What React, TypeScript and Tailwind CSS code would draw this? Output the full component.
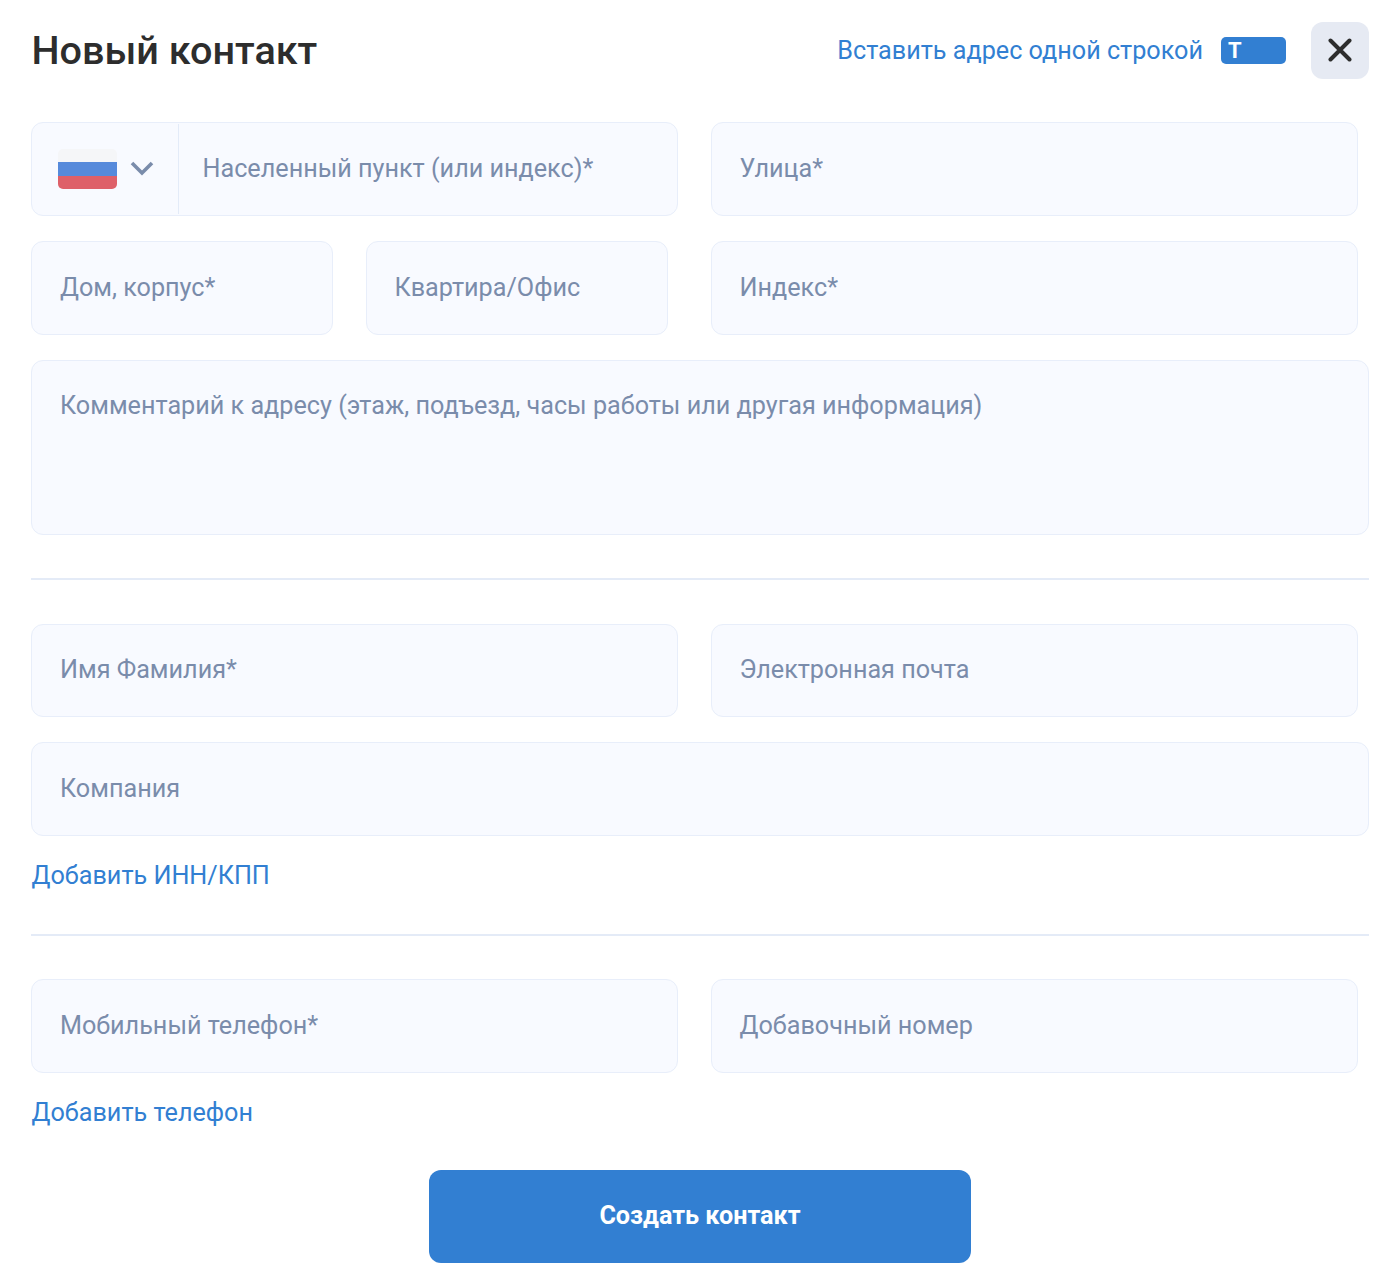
import React from "react";

const base = "bg-[#f8faff] border border-[#e8eefa] rounded-[12px]";
const ph = "text-[25.2px] leading-[32px] text-[#7a8cab]";

function Field({ label, className = "", h = "h-[94px]", pl = "pl-[28px]" }: { label: string; className?: string; h?: string; pl?: string }) {
  return (
    <div className={`${base} ${h} flex items-center ${pl} ${className}`}>
      <span className={ph}>{label}</span>
    </div>
  );
}

function Link({ children }: { children: React.ReactNode }) {
  return <a className="text-[25.2px] leading-[32px] text-[#327fd2] block pl-[0.5px]">{children}</a>;
}

export default function App() {
  return (
    <div className="w-[1400px] h-[1280px] bg-white pl-[31px] pr-[31px] font-['Roboto',sans-serif]">
      <header className="flex items-center h-[122px] pb-[22px]">
        <h1 className="text-[39.6px] leading-[48px] font-medium text-[#2d2d2d] flex-1 pt-[2px] pl-[0.5px]">Новый контакт</h1>
        <a className="text-[25.2px] leading-[32px] text-[#327fd2] mt-[1px]">Вставить адрес одной строкой</a>
        <span className="ml-[18px] w-[65px] h-[27px] bg-[#327fd2] rounded-[5px] text-white font-bold text-[22px] leading-[27px] pl-[7px]">T</span>
        <button className="ml-[25px] w-[58px] h-[57px] bg-[#e6eaf3] rounded-[12px] flex items-center justify-center">
          <svg width="24" height="24" viewBox="0 0 24 24" fill="none" stroke="#2d2d2d" strokeWidth="4" strokeLinecap="round">
            <path d="M2.5 2.5L21.5 21.5M21.5 2.5L2.5 21.5" />
          </svg>
        </button>
      </header>

      <div className="flex">
        <div className={`${base} w-[647px] h-[94px] flex items-center`}>
          <div className="w-[147px] h-[90px] border-r border-[#e3ebf8] flex items-center pl-[26px] shrink-0">
            <div className="w-[59px] h-[40px] rounded-[5px] overflow-hidden flex flex-col shrink-0">
              <div className="h-[13px] bg-[#f5f6f8]" />
              <div className="h-[14px] bg-[#568adb]" />
              <div className="h-[13px] bg-[#de6069]" />
            </div>
            <svg className="ml-[13px] mb-[2px]" width="24" height="16" viewBox="0 0 24 16" fill="none" stroke="#7a8cab" strokeWidth="3.6">
              <path d="M2 3L12 13L22 3" />
            </svg>
          </div>
          <span className={`${ph} pl-[23.5px]`}>Населенный пункт (или индекс)*</span>
        </div>
        <Field label="Улица*" className="w-[647px] ml-[33px]" pl="pl-[27.5px]" />
      </div>

      <div className="flex mt-[25px]">
        <Field label="Дом, корпус*" className="w-[302px]" />
        <Field label="Квартира/Офис" className="w-[302px] ml-[33px]" pl="pl-[27.5px]" />
        <Field label="Индекс*" className="w-[647px] ml-[43px]" pl="pl-[27.5px]" />
      </div>

      <div className={`${base} h-[175px] mt-[25px] pl-[28px] pt-[29px]`}>
        <span className={`${ph} block`}>Комментарий к адресу (этаж, подъезд, часы работы или другая информация)</span>
      </div>

      <hr className="border-0 h-[2px] bg-[#e4ebf7] mt-[43px]" />

      <div className="flex mt-[44px]">
        <Field label="Имя Фамилия*" className="w-[647px] pb-[1px]" h="h-[93px]" />
        <Field label="Электронная почта" className="w-[647px] ml-[33px] pb-[1px]" h="h-[93px]" pl="pl-[27.5px]" />
      </div>
      <Field label="Компания" className="mt-[25px]" />
      <div className="mt-[24px]"><Link>Добавить ИНН/КПП</Link></div>

      <hr className="border-0 h-[2px] bg-[#e4ebf7] mt-[42px]" />

      <div className="flex mt-[43px]">
        <Field label="Мобильный телефон*" className="w-[647px]" />
        <Field label="Добавочный номер" className="w-[647px] ml-[33px]" pl="pl-[27.5px]" />
      </div>
      <div className="mt-[24px]"><Link>Добавить телефон</Link></div>

      <div className="flex justify-center mt-[41px]">
        <button className="w-[542px] h-[93px] bg-[#327fd2] rounded-[12px] text-white text-[25.2px] font-bold leading-[32px] pb-[2px]">Создать контакт</button>
      </div>
    </div>
  );
}
